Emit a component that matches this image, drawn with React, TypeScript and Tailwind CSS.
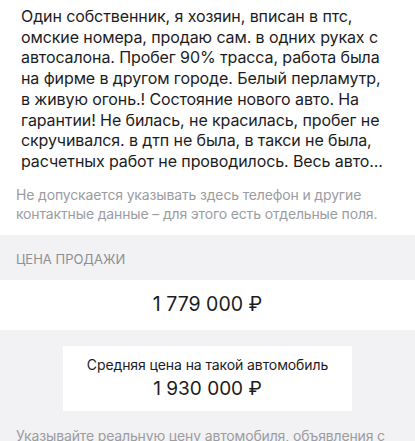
// Listing form: description, price, average price hint
const descriptionLines = [
  'Один собственник, я хозяин, вписан в птс,',
  'омские номера, продаю сам. в одних руках с',
  'автосалона. Пробег 90% трасса, работа была',
  'на фирме в другом городе. Белый перламутр,',
  'в живую огонь.! Состояние нового авто. На',
  'гарантии! Не билась, не красилась, пробег не',
  'скручивался. в дтп не была, в такси не была,',
  'расчетных работ не проводилось. Весь авто...',
]

export default function App() {
  return (
    <div className="w-[415px] h-[441px] overflow-hidden bg-white font-['Inter','Liberation_Sans',sans-serif]">
      {/* Description */}
      <div className="pl-[21px] pr-[10px] pt-[6px] pb-[13px]">
        {descriptionLines.map((line) => (
          <p key={line} className="text-[16px] leading-[20.7px] text-[#1c1c1e] tracking-[-0.1px] whitespace-nowrap">
            {line}
          </p>
        ))}
      </div>

      {/* Hint */}
      <div className="px-[16px] pb-[12px]">
        <p className="text-[14px] leading-[19px] text-[#9c9ca1] tracking-[-0.15px]">
          Не допускается указывать здесь телефон и другие
          <br />
          контактные данные – для этого есть отдельные поля.
        </p>
      </div>

      {/* Section header */}
      <div className="h-[45px] bg-[#f2f2f4] px-[16px] flex items-end pb-[10px]">
        <span className="text-[13px] uppercase text-[#8e8e93]">Цена продажи</span>
      </div>

      {/* Price */}
      <div className="h-[50px] flex items-center justify-center">
        <span className="text-[19.5px] text-[#1c1c1e]">1 779 000 ₽</span>
      </div>

      {/* Average price card */}
      <div className="bg-[#f2f2f4] pt-[16px] pb-[10px]">
        <div className="mx-auto w-[289px] h-[65px] bg-white flex flex-col items-center justify-center">
          <span className="text-[14px] leading-[20px] text-[#1c1c1e] tracking-[-0.1px]">Средняя цена на такой автомобиль</span>
          <span className="text-[19px] leading-[27px] text-[#1c1c1e]">1 930 000 ₽</span>
        </div>
        <p className="mt-[15px] px-[16px] text-[14px] leading-[19px] text-[#9c9ca1] tracking-[-0.15px]">
          Указывайте реальную цену автомобиля, объявления с заниженной ценой будут заблокированы.
        </p>
      </div>
    </div>
  )
}
